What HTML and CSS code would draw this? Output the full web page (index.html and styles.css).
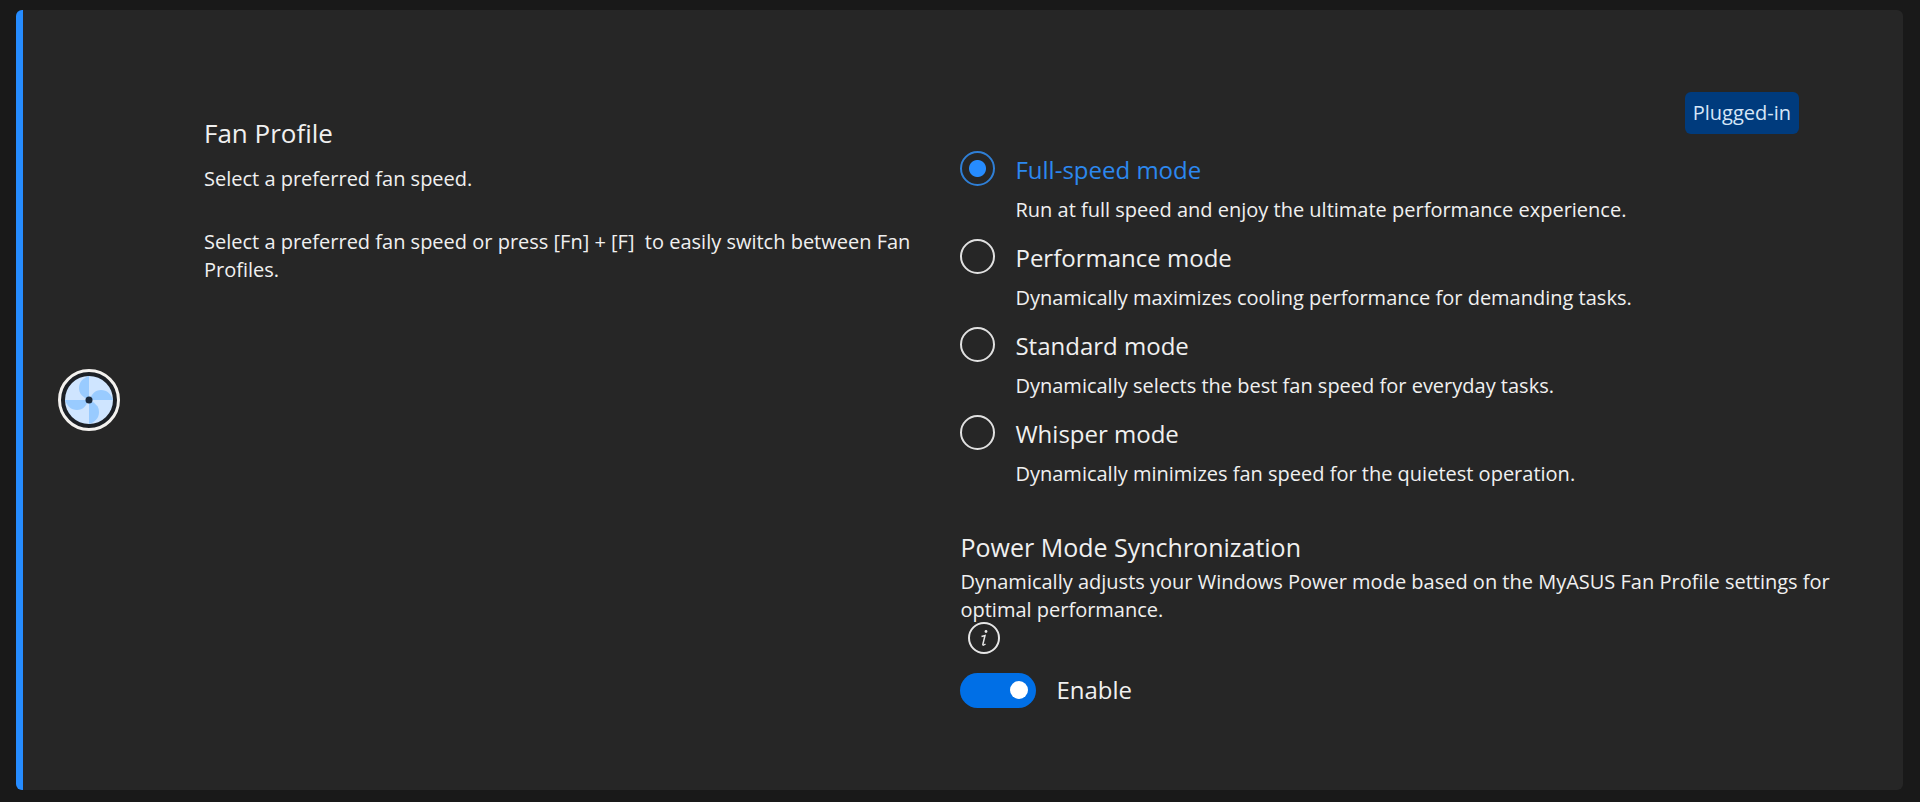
FILE: index.html
```html
<!DOCTYPE html>
<html lang="en">
<head>
<meta charset="utf-8">
<meta name="viewport" content="width=device-width, initial-scale=1">
<title>Fan Profile</title>
<link rel="stylesheet" href="styles.css">
</head>
<body>
<main class="card">
  <div class="card-icon">
    <svg class="fan" viewBox="0 0 62 62" aria-hidden="true">
      <circle cx="31" cy="31" r="29.500" fill="#1c2026" stroke="#f3f1ee" stroke-width="3"/>
      <circle cx="31" cy="31" r="24" fill="#cfe5ff"/>
      <g fill="#99cbff">
        <path id="blade" d="M31 31V7C25 9 21 13 21 19C21 25 25 28 31 31Z"/>
        <use href="#blade" transform="rotate(90 31 31)"/>
        <use href="#blade" transform="rotate(180 31 31)"/>
        <use href="#blade" transform="rotate(270 31 31)"/>
      </g>
      <circle cx="31" cy="31" r="3.500" fill="#1c2b3d"/>
    </svg>
  </div>

  <section class="intro">
    <h1 class="title">Fan Profile</h1>
    <p class="text">Select a preferred fan speed.</p>
    <p class="text">Select a preferred fan speed or press [Fn] + [F]&nbsp; to easily switch between Fan Profiles.</p>
  </section>

  <section class="settings">
    <div class="status"><span class="badge">Plugged-in</span></div>
    <div class="modes" role="radiogroup" aria-label="Fan Profile">
      <div class="mode">
        <input class="radio" type="radio" name="mode" id="full" checked>
        <label class="mode-name" for="full">Full-speed mode</label>
        <p class="mode-text">Run at full speed and enjoy the ultimate performance experience.</p>
      </div>
      <div class="mode">
        <input class="radio" type="radio" name="mode" id="performance">
        <label class="mode-name" for="performance">Performance mode</label>
        <p class="mode-text">Dynamically maximizes cooling performance for demanding tasks.</p>
      </div>
      <div class="mode">
        <input class="radio" type="radio" name="mode" id="standard">
        <label class="mode-name" for="standard">Standard mode</label>
        <p class="mode-text">Dynamically selects the best fan speed for everyday tasks.</p>
      </div>
      <div class="mode">
        <input class="radio" type="radio" name="mode" id="whisper">
        <label class="mode-name" for="whisper">Whisper mode</label>
        <p class="mode-text">Dynamically minimizes fan speed for the quietest operation.</p>
      </div>
    </div>

    <div class="sync">
      <h2 class="subtitle">Power Mode Synchronization</h2>
      <p class="sync-text">Dynamically adjusts your Windows Power mode based on the MyASUS Fan Profile settings for optimal performance.</p>
      <button class="info" type="button" aria-label="More information">
        <svg class="info-icon" viewBox="0 0 32 32" aria-hidden="true">
          <circle cx="16" cy="16" r="15" fill="none" stroke="#e6e6e6" stroke-width="2"/>
          <circle cx="18" cy="9.500" r="1.400" fill="#e6e6e6"/>
          <path d="M13.500 14.500L17 13.500L14.800 22.500Q14.800 24 17.500 22" fill="none" stroke="#e6e6e6" stroke-width="1.500"/>
        </svg>
      </button>
      <div class="switch-row">
        <input class="switch" type="checkbox" role="switch" id="enable" checked>
        <label class="switch-label" for="enable">Enable</label>
      </div>
    </div>
  </section>
</main>
</body>
</html>
```
FILE: styles.css
```css
* {
  box-sizing: border-box;
}

body {
  margin: 0;
  min-height: 100vh;
  display: grid;
  padding: 10px 17px 12px 16px;
  background: #191919;
  color: #f0f0f0;
  font-family: "Open Sans", "Noto Sans", sans-serif;
  font-size: 20px;
  line-height: 28px;
}

h1,
h2,
p {
  margin: 0;
  font-weight: 400;
}

.card {
  display: grid;
  grid-template-columns: 146px 6fr 7fr;
  padding: 82px 60px 82px 35px;
  border-left: 7px solid #268cff;
  border-radius: 6px;
  background: #262626;
}

.card-icon {
  align-self: center;
}

.fan {
  display: block;
  width: 62px;
}

.intro {
  display: flex;
  flex-direction: column;
  padding-top: 23px;
  padding-right: 32px;
}

.title {
  font-size: 26px;
  line-height: 36px;
  margin-bottom: 14px;
}

.text + .text {
  margin-top: 35px;
}

.status {
  display: flex;
  justify-content: flex-end;
  padding-right: 44px;
}

.badge {
  padding: 7px 8px;
  border-radius: 6px;
  background: #003b7d;
  color: #d6e6f7;
}

.modes {
  display: grid;
  gap: 15px;
  margin-top: 17px;
}

.mode {
  display: grid;
  grid-template-columns: 35px 1fr;
  column-gap: 20px;
  row-gap: 7px;
}

.mode-name {
  font-size: 24px;
  line-height: 38px;
}

.mode-text {
  grid-column: 2;
}

.radio {
  appearance: none;
  width: 35px;
  height: 35px;
  margin: 0;
  border: 2px solid #e0e0e0;
  border-radius: 50%;
}

.radio:checked {
  border-color: #2f7fd6;
  background: radial-gradient(circle, #268cff 8px, transparent 9px);
}

.radio:checked + .mode-name {
  color: #2c88ef;
}

.sync {
  display: flex;
  flex-direction: column;
  align-items: flex-start;
  margin-top: 41px;
}

.subtitle {
  font-size: 25px;
  line-height: 36px;
  margin-bottom: 3px;
}

.info {
  margin: -2px 0 0 8px;
  padding: 0;
  border: 0;
  background: none;
}

.info-icon {
  display: block;
  width: 32px;
}

.switch-row {
  display: flex;
  align-items: center;
  gap: 20px;
  margin-top: 18px;
}

.switch {
  appearance: none;
  width: 76px;
  height: 35px;
  margin: 0;
  padding: 0 8px;
  display: flex;
  align-items: center;
  border-radius: 18px;
  background: #4a4a4a;
}

.switch::before {
  content: "";
  width: 18px;
  height: 18px;
  border-radius: 50%;
  background: #fff;
}

.switch:checked {
  justify-content: flex-end;
  background: #006fe6;
}

.switch-label {
  font-size: 24px;
  line-height: 36px;
}
```
